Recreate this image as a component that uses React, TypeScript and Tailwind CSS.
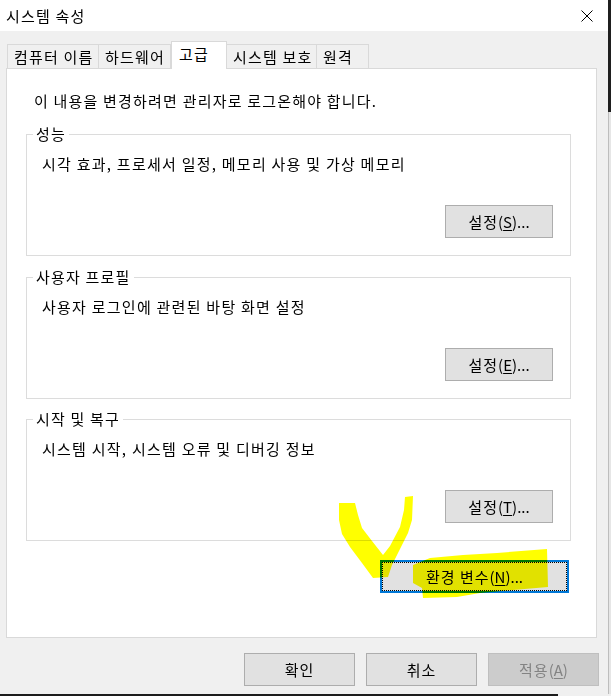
import React from "react";

function Btn({
  label,
  acc,
  rest,
  w,
  disabled,
}: {
  label: string;
  acc?: string;
  rest?: string;
  w: string;
  disabled?: boolean;
}) {
  return (
    <div
      className={`${w} h-[33px] border flex items-center justify-center leading-[20px] ${
        disabled
          ? "bg-[#cccccc] border-[#bfbfbf] text-[#838383]"
          : "bg-[#e1e1e1] border-[#adadad] text-black"
      }`}
    >
      <span>
        <span className="tracking-[1px]">{label}</span>
        {acc !== undefined && (
          <>
            (<span className="underline underline-offset-[2px]">{acc}</span>)
          </>
        )}
        {rest}
      </span>
    </div>
  );
}

function Group({
  title,
  desc,
  acc,
  className,
}: {
  title: string;
  desc: string;
  acc: string;
  className: string;
}) {
  return (
    <div className={`relative h-[122px] border border-[#dcdcdc] flex flex-col ${className}`}>
      <span className="absolute top-[-11px] left-[6px] bg-white px-[3px] leading-[20px] tracking-[1.2px]">
        {title}
      </span>
      <div className="pt-[19px] pl-[15px] leading-[20px] tracking-[1.25px]">{desc}</div>
      <div className="mt-auto flex justify-end pr-[17px] pb-[17px]">
        <Btn w="w-[108px]" label="설정" acc={acc} rest="..." />
      </div>
    </div>
  );
}

const tabs = [
  { t: "컴퓨터 이름", w: "w-[92px]" },
  { t: "하드웨어", w: "w-[72px]" },
  { t: "고급", w: "w-[56px]", sel: true },
  { t: "시스템 보호", w: "w-[90px]" },
  { t: "원격", w: "w-[52px]" },
];

export default function App() {
  return (
    <div className="relative w-[611px] h-[696px] bg-[#1c1c1c] flex flex-col font-['Noto_Sans_CJK_KR','Noto_Sans',sans-serif] text-[15px] text-black">
      <div className="flex h-[694px]">
        <div className="w-[608px] h-full bg-[#f0f0f0] flex flex-col">
          {/* title bar */}
          <div className="h-[31px] bg-white flex items-center justify-between pl-[6px] pr-[15px]">
            <span className="leading-[20px] tracking-[1.2px]">시스템 속성</span>
            <svg width="12" height="12" viewBox="0 0 12 12">
              <path d="M0.5 0.5L11.5 11.5M11.5 0.5L0.5 11.5" stroke="#000" strokeWidth="1" fill="none" />
            </svg>
          </div>

          <div className="pt-[10px] pl-[6px]">
            {/* tabs */}
            <div className="h-[27px] flex items-end pl-[1px]">
              {tabs.map((tb, i) =>
                tb.sel ? (
                  <div
                    key={tb.t}
                    className={`${tb.w} relative z-10 h-[28px] -mb-[1px] bg-white border-l border-r border-t border-[#d9d9d9] pl-[7px] pt-[2px] leading-[20px] tracking-[1.2px]`}
                  >
                    {tb.t}
                  </div>
                ) : (
                  <div
                    key={tb.t}
                    className={`${tb.w} h-[24px] bg-[#f0f0f0] border-t border-r ${
                      i === 0 ? "border-l" : ""
                    } border-[#d9d9d9] pl-[6px] pt-[2px] leading-[20px] tracking-[1.2px] whitespace-nowrap`}
                  >
                    {tb.t}
                  </div>
                )
              )}
            </div>

            {/* panel */}
            <div className="w-[591px] h-[570px] bg-white border border-[#d9d9d9] pl-[19px] pr-[25px] pt-[22px] flex flex-col">
              <div className="pl-[8px] leading-[20px] tracking-[1.2px]">
                이 내용을 변경하려면 관리자로 로그온해야 합니다.
              </div>
              <Group
                className="mt-[23px]"
                title="성능"
                desc="시각 효과, 프로세서 일정, 메모리 사용 및 가상 메모리"
                acc="S"
              />
              <Group
                className="mt-[21px]"
                title="사용자 프로필"
                desc="사용자 로그인에 관련된 바탕 화면 설정"
                acc="E"
              />
              <Group
                className="mt-[20px]"
                title="시작 및 복구"
                desc="시스템 시작, 시스템 오류 및 디버깅 정보"
                acc="T"
              />
              <div className="mt-[19px] flex justify-end pr-[2px]">
                <div className="w-[189px] h-[33px] border-2 border-[#0078d7] bg-[#e1e1e1]">
                  <div className="w-full h-full border border-dotted border-black flex items-center justify-center leading-[20px]">
                    <span>
                      <span className="tracking-[1px]">환경 변수</span>(
                      <span className="underline underline-offset-[2px]">N</span>)...
                    </span>
                  </div>
                </div>
              </div>
            </div>
          </div>

          {/* bottom buttons */}
          <div className="mt-[15px] flex justify-end gap-[11px] pr-[9px]">
            <Btn w="w-[111px]" label="확인" />
            <Btn w="w-[111px]" label="취소" />
            <Btn w="w-[111px]" label="적용" acc="A" disabled />
          </div>
        </div>
        <div className="w-[3px] flex flex-col">
          <div className="h-[112px] bg-[#1f1f1f]" />
          <div className="flex-1 bg-[#e6e6e6] border-l border-[#bdbdbd]" />
        </div>
      </div>
      <div className="h-[2px] flex">
        <div className="w-[558px] bg-[#1c1c1c]" />
        <div className="flex-1 bg-[#f0f0f0]" />
      </div>

      {/* highlighter marks */}
      <svg
        className="absolute inset-0 pointer-events-none mix-blend-multiply"
        width="611"
        height="696"
        viewBox="0 0 611 696"
      >
        <polygon
          fill="#ffff00"
          points="339,503 355,503 358,515 362,528 372,541 383,555 390,546 400,527 404,510 405,497 413,496 412,520 408,533 398,553 392,565 388,577 373,578 362,563 350,547 342,534 339,520"
        />
        <polygon
          fill="#ffff00"
          points="413,565 430,558 463,555 497,553 547,549 548,587 513,590 480,593 457,597 423,598 422,588 413,583"
        />
      </svg>
    </div>
  );
}
